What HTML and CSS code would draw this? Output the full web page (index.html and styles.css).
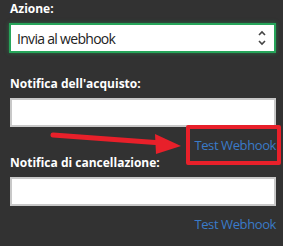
FILE: index.html
```html
<!DOCTYPE html>
<html lang="it">
<head>
    <meta charset="UTF-8">
    <title>Azione webhook</title>
    <link rel="stylesheet" href="styles.css">
</head>
<body>
<div class="panel">
    <label class="field-label">Azione:</label>
    <div class="select-box">
        <span>Invia al webhook</span>
        <svg class="chevrons" width="8" height="16" viewBox="0 0 8 16">
            <path d="M1 5 L4 2 L7 5" fill="none" stroke="#444" stroke-width="1.6"/>
            <path d="M1 11 L4 14 L7 11" fill="none" stroke="#444" stroke-width="1.6"/>
        </svg>
    </div>

    <label class="field-label first-gap">Notifica dell'acquisto:</label>
    <input type="text" class="text-input">
    <a class="test-link" href="#">Test Webhook</a>

    <label class="field-label">Notifica di cancellazione:</label>
    <input type="text" class="text-input">
    <a class="test-link" href="#">Test Webhook</a>

    <!-- annotation -->
    <div class="highlight"></div>
    <svg class="arrow" width="150" height="30" viewBox="0 0 150 30">
        <line x1="3" y1="7" x2="112" y2="15" stroke="#e8202a" stroke-width="5" stroke-linecap="round"/>
        <polygon points="105,6 131,18 106,26" fill="#e8202a"/>
    </svg>
</div>
</body>
</html>
```

FILE: styles.css
```css
body {
    margin: 0;
    background-color: #323232;
    font-family: "Open Sans", Arial, sans-serif;
}
.panel {
    position: relative;
    display: flex;
    flex-direction: column;
    padding: 2px 7px 0 10px;
}
.field-label {
    color: #fff;
    font-weight: bold;
    font-size: 12px;
    line-height: 14px;
    margin-bottom: 7px;
}
.first-gap {
    margin-top: 24px;
}
.select-box {
    display: flex;
    align-items: center;
    justify-content: space-between;
    height: 26px;
    margin-left: -1px;
    padding: 0 8px 0 6px;
    background: #fff;
    border: 2px solid #27a55a;
    box-shadow: 0 0 4px rgba(39, 165, 90, 0.5);
    font-size: 14px;
    letter-spacing: -0.7px;
    color: #222;
}
.chevrons {
    display: block;
}
.text-input {
    box-sizing: border-box;
    height: 29px;
    margin: 0;
    width: 266px;
    border: 2px solid #c8c8c8;
    background: #fff;
}
.test-link {
    align-self: flex-end;
    margin: 10px 0 3px;
    color: #3a7bc8;
    font-size: 13px;
    letter-spacing: -0.4px;
    line-height: 16px;
    text-decoration: none;
}
.highlight {
    position: absolute;
    left: 186px;
    top: 125px;
    width: 87px;
    height: 32px;
    border: 4px solid #e8202a;
    border-radius: 2px;
}
.arrow {
    position: absolute;
    left: 50px;
    top: 128px;
}
```
